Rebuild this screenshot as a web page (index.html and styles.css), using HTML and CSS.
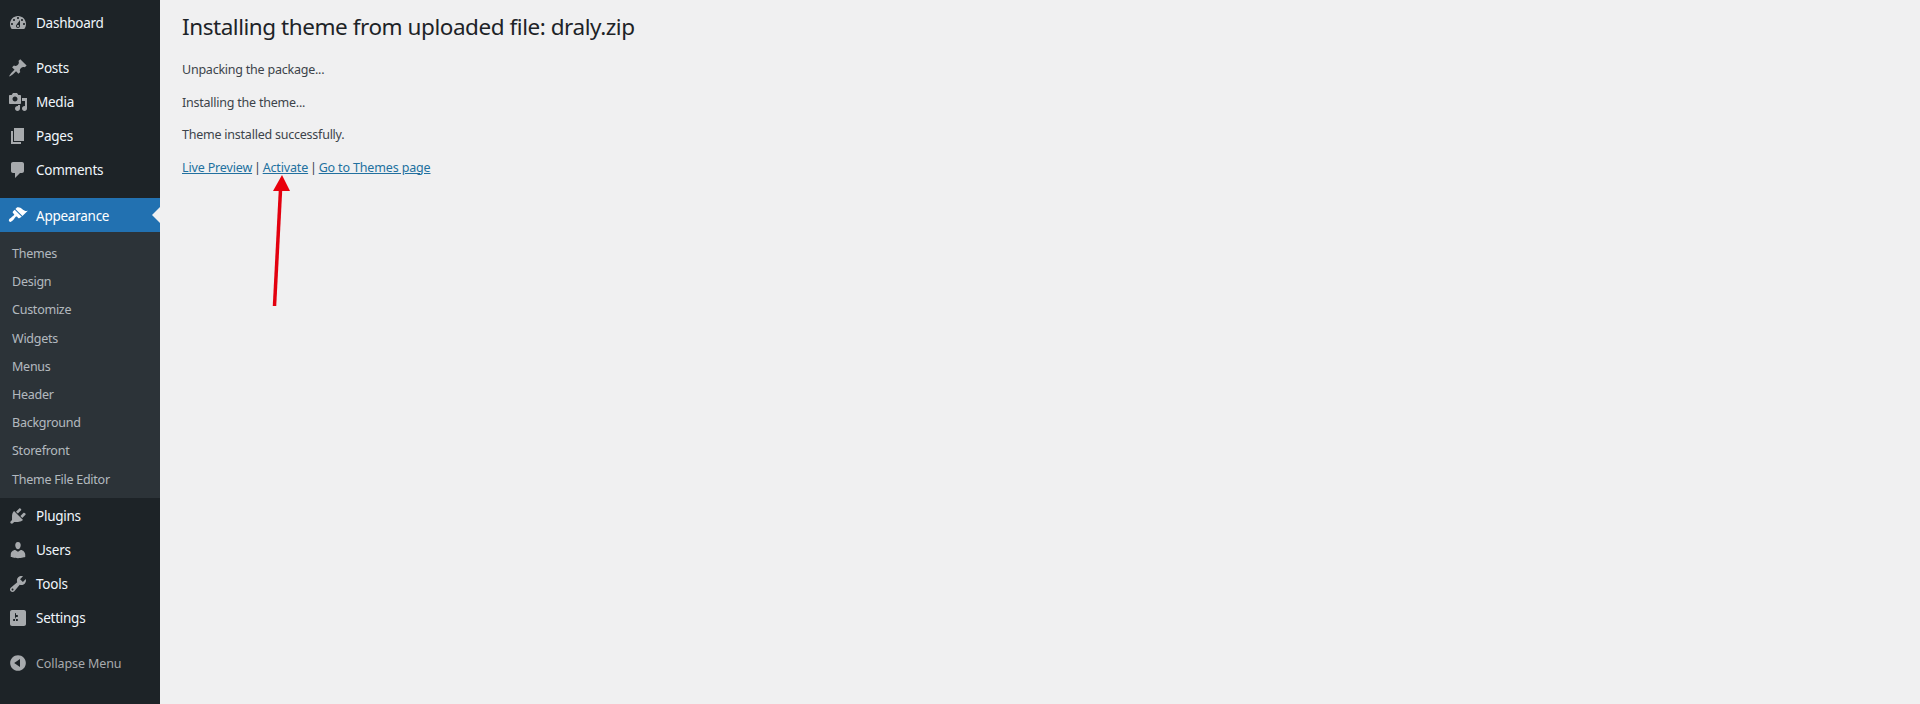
FILE: index.html
```html
<!DOCTYPE html>
<html lang="en">
<head>
    <meta charset="UTF-8">
    <meta name="viewport" content="width=device-width, initial-scale=1.0">
    <title>Install Themes</title>
    <link rel="stylesheet" href="styles.css">
</head>
<body>

<div class="sidebar">
  <ul class="menu top">
    <li class="item"><svg class="icon" viewBox="0 0 20 20"><path d="M3.76 16h12.48c1.1-1.37 1.76-3.11 1.76-5 0-4.42-3.58-8-8-8s-8 3.58-8 8c0 1.89.66 3.63 1.76 5zM10 4c.55 0 1 .45 1 1s-.45 1-1 1-1-.45-1-1 .45-1 1-1zM6 6c.55 0 1 .45 1 1s-.45 1-1 1-1-.45-1-1 .45-1 1-1zm8 0c.55 0 1 .45 1 1s-.45 1-1 1-1-.45-1-1 .45-1 1-1zm-5.37 5.55L12 7v6c0 1.1-.9 2-2 2s-2-.9-2-2c0-.57.24-1.08.63-1.45zM4 10c.55 0 1 .45 1 1s-.45 1-1 1-1-.45-1-1 .45-1 1-1zm12 0c.55 0 1 .45 1 1s-.45 1-1 1-1-.45-1-1 .45-1 1-1zm-5 3c0-.55-.45-1-1-1s-1 .45-1 1 .45 1 1 1 1-.45 1-1z"/></svg><span>Dashboard</span></li>
  </ul>

  <ul class="menu top">
    <li class="item"><svg class="icon" viewBox="0 0 20 20"><path d="M10.44 3.02l1.82-1.82 6.36 6.35-1.83 1.82c-1.05-.68-2.48-.57-3.41.36l-.75.75c-.92.93-1.04 2.35-.35 3.41l-1.83 1.82-2.41-2.41-2.8 2.79c-.42.42-3.38 2.71-3.8 2.29s1.86-3.39 2.28-3.81l2.79-2.79L4.1 9.36l1.83-1.82c1.05.69 2.48.57 3.4-.36l.75-.75c.93-.92 1.05-2.35.36-3.41z"/></svg><span>Posts</span></li>
    <li class="item"><svg class="icon" viewBox="0 0 20 20"><path d="M13 11V4c0-.55-.45-1-1-1h-1.67L9 1H5L3.67 3H2c-.55 0-1 .45-1 1v7c0 .55.45 1 1 1h10c.55 0 1-.45 1-1zM7 4.5c1.38 0 2.5 1.12 2.5 2.5S8.38 9.5 7 9.5 4.5 8.38 4.5 7 5.62 4.5 7 4.5zM14 6h5v10.5c0 1.38-1.12 2.5-2.5 2.5S14 17.88 14 16.5s1.12-2.5 2.5-2.5c.17 0 .34.02.5.05V9h-3V6zm-4 8.05V13h2v3.5c0 1.38-1.12 2.5-2.5 2.5S7 17.88 7 16.5 8.12 14 9.5 14c.17 0 .34.02.5.05z"/></svg><span>Media</span></li>
    <li class="item"><svg class="icon" viewBox="0 0 20 20"><path d="M6 15V2h10v13H6zm-1 1h8v2H3V5h2v11z"/></svg><span>Pages</span></li>
    <li class="item"><svg class="icon" viewBox="0 0 20 20"><path d="M5 2h9c1.1 0 2 .9 2 2v7c0 1.1-.9 2-2 2h-2l-5 5v-5H5c-1.1 0-2-.9-2-2V4c0-1.1.9-2 2-2z"/></svg><span>Comments</span></li>
  </ul>

  <ul class="menu">
    <li class="item current"><svg class="icon" viewBox="0 0 20 20"><path d="M14.48 11.06L7.41 3.99l1.5-1.5c.5-.56 2.3-.47 3.51.32 1.21.8 1.43 1.28 2.91 2.1 1.18.64 2.45 1.26 4.45.85zm-.71.71L6.7 4.7 4.93 6.47c-.39.39-.39 1.02 0 1.41l1.06 1.06c.39.39.39 1.03 0 1.42-.6.6-1.43 1.11-2.21 1.69-.35.26-.7.53-1.01.84C1.43 13.23.18 15.26 1.4 16.48c.94.94 2.2.2 3.8-1.41.3-.31.58-.66.84-1.01.58-.78 1.09-1.61 1.69-2.21.39-.39 1.02-.39 1.41 0l1.06 1.06c.39.39 1.02.39 1.41 0z"/></svg><span>Appearance</span></li>
    <li>
      <ul class="submenu">
        <li>Themes</li>
        <li>Design</li>
        <li>Customize</li>
        <li>Widgets</li>
        <li>Menus</li>
        <li>Header</li>
        <li>Background</li>
        <li>Storefront</li>
        <li>Theme File Editor</li>
      </ul>
    </li>
    <li class="item"><svg class="icon" viewBox="0 0 20 20"><path d="M13.11 4.36L9.87 7.6 8 5.73l3.24-3.24c.35-.34 1.05-.2 1.56.32.52.51.66 1.21.31 1.55zm-8 1.77l.91-1.12 9.01 9.01-1.19.84c-.71.71-2.63 1.16-3.82 1.16H6.14L4.9 17.26c-.59.59-1.54.59-2.12 0-.59-.58-.59-1.53 0-2.12l1.24-1.24v-3.88c0-1.13.4-3.19 1.09-3.89zm7.26 3.97l3.24-3.24c.34-.35 1.04-.21 1.55.31.52.51.66 1.21.31 1.55l-3.24 3.25z"/></svg><span>Plugins</span></li>
    <li class="item"><svg class="icon" viewBox="0 0 20 20"><path d="M10 9.25c-2.27 0-2.73-3.44-2.73-3.44C7 4.02 7.82 2 9.97 2c2.16 0 2.98 2.02 2.71 3.81 0 0-.41 3.44-2.68 3.44zm0 2.57L12.72 10c2.39 0 4.52 2.33 4.52 4.53v2.49s-3.65 1.13-7.24 1.13c-3.65 0-7.24-1.13-7.24-1.13v-2.49c0-2.25 1.94-4.48 4.47-4.48z"/></svg><span>Users</span></li>
    <li class="item"><svg class="icon" viewBox="0 0 20 20"><path d="M16.68 9.77c-1.34 1.34-3.3 1.67-4.95.99l-5.41 6.52c-.99.99-2.59.99-3.58 0s-.99-2.59 0-3.57l6.52-5.42c-.68-1.65-.35-3.61.99-4.95 1.28-1.28 3.12-1.62 4.72-1.06l-2.89 2.89 2.82 2.82 2.86-2.87c.53 1.58.18 3.39-1.08 4.65zM3.81 16.21c.4.39 1.04.39 1.43 0 .4-.4.4-1.04 0-1.43-.39-.4-1.03-.4-1.43 0-.39.39-.39 1.03 0 1.43z"/></svg><span>Tools</span></li>
    <li class="item"><svg class="icon" viewBox="0 0 20 20"><path d="M18 16V4c0-1.1-.9-2-2-2H4c-1.1 0-2 .9-2 2v12c0 1.1.9 2 2 2h12c1.1 0 2-.9 2-2zM8 11h1c.55 0 1 .45 1 1s-.45 1-1 1H8v1.5c0 .28-.22.5-.5.5s-.5-.22-.5-.5V13H6c-.55 0-1-.45-1-1s.45-1 1-1h1V5.5c0-.28.22-.5.5-.5s.5.22.5.5V7h1c.55 0 1 .45 1 1s-.45 1-1 1h-1v5.5c0 .28-.22.5-.5.5s-.5-.22-.5-.5V9z"/></svg><span>Settings</span></li>
  </ul>

  <div class="item collapse"><svg class="icon" viewBox="0 0 20 20"><path d="M10 2.16c4.33 0 7.84 3.51 7.84 7.84s-3.51 7.84-7.84 7.84S2.16 14.33 2.16 10 5.71 2.16 10 2.16zm2 11.72V6.12L6.18 9.97z"/></svg><span>Collapse Menu</span></div>
</div>

<div class="content">
  <h1>Installing theme from uploaded file: draly.zip</h1>
  <p>Unpacking the package...</p>
  <p>Installing the theme...</p>
  <p>Theme installed successfully.</p>
  <p class="actions"><a href="#">Live Preview</a> <span class="sep">|</span> <a href="#">Activate</a> <span class="sep">|</span> <a href="#">Go to Themes page</a></p>
</div>

<!-- red annotation pointing at Activate -->
<svg class="arrow" viewBox="0 0 30 140">
  <line x1="4.5" y1="136" x2="10.5" y2="20" />
  <polygon points="12,5 3,21 20,21" />
</svg>

</body>
</html>
```

FILE: styles.css
```css
* {
    margin: 0;
    padding: 0;
    box-sizing: border-box;
}
body {
    display: flex;
    min-height: 100vh;
    overflow: hidden;
    background-color: #f0f0f1;
    font-family: "Noto Sans", "Open Sans", sans-serif;
    font-size: 12.5px;
    color: #3c434a;
}
ul {
    list-style: none;
}

.sidebar {
    width: 160px;
    flex-shrink: 0;
    background-color: #1d2327;
    color: #f0f6fc;
    padding-top: 6px;
}
.menu {
    margin-bottom: 11px;
}
.item {
    display: flex;
    align-items: center;
    height: 34px;
    font-size: 13.5px;
    letter-spacing: -0.25px;
    position: relative;
}
.top .item span {
    margin-top: -1px;
}
.current span,
.collapse span {
    margin-top: 1px;
}
.icon {
    width: 20px;
    height: 20px;
    margin: 0 8px;
    flex-shrink: 0;
    fill: #a7aaad;
}
.current {
    background-color: #2271b1;
    color: white;
}
.current .icon {
    fill: white;
}
/* little notch on the active item */
.current::after {
    content: "";
    position: absolute;
    right: 0;
    top: 9px;
    border: 8px solid transparent;
    border-right-color: #f0f0f1;
    border-left-width: 0;
}
.submenu {
    background-color: #2c3338;
    padding: 7px 0 5px;
    margin-bottom: 1px;
}
.submenu li {
    height: 28.2px;
    line-height: 29.5px;
    padding-left: 12px;
    font-size: 12.5px;
    letter-spacing: -0.25px;
    color: rgba(240, 246, 252, 0.7);
}
.collapse {
    font-size: 12.5px;
    letter-spacing: -0.1px;
    color: #a7aaad;
}

.content {
    flex: 1;
    padding: 12px 22px;
}
h1 {
    font-size: 22.5px;
    font-weight: 400;
    line-height: 30px;
    letter-spacing: -0.45px;
    color: #1d2327;
    margin-bottom: 18px;
}
p {
    line-height: 19.5px;
    margin-bottom: 13px;
    letter-spacing: -0.23px;
}
a {
    color: #22709f;
    letter-spacing: -0.15px;
}
.sep {
    margin: 0 -1.1px;
}

.arrow {
    position: absolute;
    left: 270px;
    top: 170px;
    width: 30px;
    height: 140px;
}
.arrow line {
    stroke: #e3000f;
    stroke-width: 3.5;
}
.arrow polygon {
    fill: #e9000c;
}
```
